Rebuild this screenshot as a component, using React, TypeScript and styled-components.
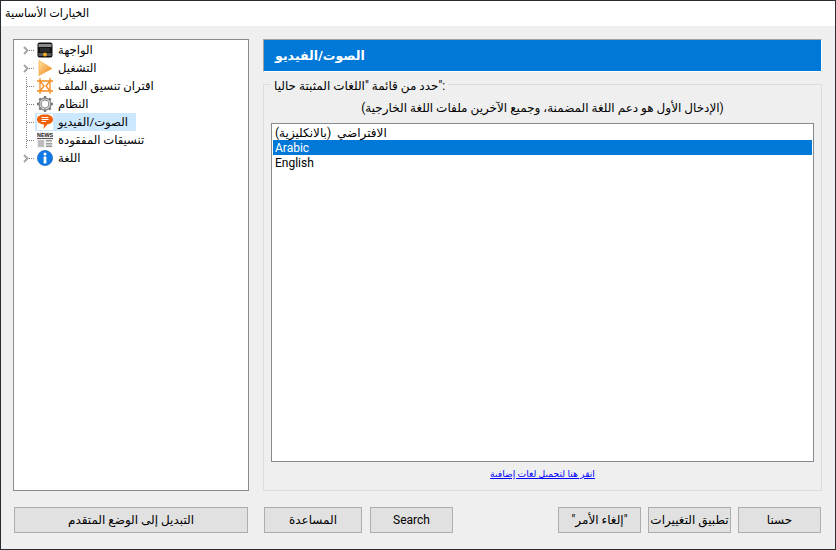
import React from 'react';
import styled, { createGlobalStyle } from 'styled-components';

const GlobalStyle = createGlobalStyle`
  html, body { margin: 0; padding: 0; background: #efefef; }
  body { font-family: Roboto, "DejaVu Sans", sans-serif; font-size: 12px; color: #000; }
`;

const Window = styled.div`
  width: 836px;
  height: 550px;
  box-sizing: border-box;
  border: 1px solid #2b2b33;
  display: flex;
  flex-direction: column;
  background: #efefef;
  overflow: hidden;
`;
const TitleBar = styled.div`
  height: 25px;
  flex: none;
  box-sizing: border-box;
  background: #fff;
  display: flex;
  align-items: center;
  padding: 0 0 0 4px;
  font-size: 11.3px;
`;
const Main = styled.div`
  display: flex;
  gap: 14px;
  height: 452px;
  margin: 13px 13px 0 12px;
`;
const TreeBox = styled.div`
  width: 236px;
  box-sizing: border-box;
  flex: none;
  background: #fff;
  border: 1px solid #868a91;
  padding-top: 1px;
`;
const TreeRow = styled.div`
  height: 18px;
  display: flex;
  align-items: center;
  padding-left: 8px;
`;
const Expander = styled.div<{ $stem?: 'full' | 'none' }>`
  position: relative;
  width: 13px;
  height: 18px;
  flex: none;
  &::before {
    content: '';
    position: absolute;
    left: 7px;
    right: 0;
    top: 9px;
    height: 1px;
    background: repeating-linear-gradient(90deg, #7d7d7d 0 1px, transparent 1px 2px);
  }
  ${(p) =>
    p.$stem === 'full' &&
    `&::before { left: 5px; }
    &::after {
      content: '';
      position: absolute;
      left: 4px;
      top: 0;
      bottom: 0;
      width: 1px;
      background: repeating-linear-gradient(180deg, #7d7d7d 0 1px, transparent 1px 2px);
    }`}
`;
const Chevron = styled.svg`
  position: absolute;
  left: 0;
  top: 5px;
  width: 7px;
  height: 9px;
`;
const Entry = styled.div<{ $selected?: boolean }>`
  height: 18px;
  display: flex;
  align-items: center;
  gap: 5px;
  padding: 0 ${(p) => (p.$selected ? 8 : 4)}px 0 2px;
  background: ${(p) => (p.$selected ? '#cce8ff' : 'transparent')};
`;
const EntryLabel = styled.span`
  font-size: 11.6px;
`;
const Icon = styled.svg`
  width: 16px;
  height: 16px;
  flex: none;
  display: block;
`;
const Panel = styled.div`
  flex: 1;
  display: flex;
  flex-direction: column;
  min-width: 0;
`;
const Header = styled.div`
  flex: none;
  box-sizing: border-box;
  height: 33px;
  background: #0078d7;
  border-top: 1px solid #a0a0a0;
  border-left: 1px solid #a0a0a0;
  border-right: 1px solid #fff;
  border-bottom: 1px solid #fff;
  color: #fff;
  font-weight: bold;
  font-size: 12.6px;
  display: flex;
  align-items: center;
  padding: 0 0 0 11px;
`;
const Group = styled.fieldset`
  margin: 4px 0 0;
  padding: 0 7px 0 7px;
  flex: 1;
  min-height: 0;
  border: 1px solid #dcdcdc;
  display: flex;
  flex-direction: column;
  min-inline-size: 0;
`;
const Legend = styled.legend`
  margin-left: 0;
  padding: 0 3px;
  height: 16px;
  line-height: 20px;
`;
const Hint = styled.div`
  text-align: center;
  height: 16px;
  line-height: 18px;
  margin-top: 7px;
`;
const ListBox = styled.div`
  height: 339px;
  box-sizing: border-box;
  margin: 8px 0 0;
  background: #fff;
  border: 1px solid #868a91;
  padding: 1px;
`;
const ListItem = styled.div<{ $selected?: boolean }>`
  height: 15px;
  line-height: 17px;
  padding-left: 2px;
  white-space: pre;
  background: ${(p) => (p.$selected ? '#0078d7' : 'transparent')};
  color: ${(p) => (p.$selected ? '#fff' : '#000')};
`;
const LinkRow = styled.div`
  text-align: center;
  margin-top: 5px;
  font-size: 9.2px;
  line-height: 14px;
`;
const MoreLink = styled.a`
  color: #0000ff;
  text-decoration: underline;
`;
const Footer = styled.div`
  display: flex;
  margin: 16px 14px 0 13px;
  height: 26px;
`;
const Button = styled.button<{ $width: number; $gap?: number }>`
  width: ${(p) => p.$width}px;
  margin-left: ${(p) => p.$gap ?? 0}px;
  height: 26px;
  flex: none;
  box-sizing: border-box;
  padding: 0;
  background: #e1e1e1;
  border: 1px solid #adadad;
  border-radius: 0;
  font: inherit;
  color: #000;
`;
const Spacer = styled.div`
  flex: 1;
`;

const FilmIcon = () => (
  <Icon viewBox="0 0 16 16">
    <rect x="0.5" y="0.5" width="15" height="15" rx="2" fill="#111" />
    <rect x="1.5" y="2" width="13" height="3" fill="#8b8b8b" />
    <rect x="1.5" y="11" width="13" height="3" fill="#555" />
    <circle cx="8" cy="12.5" r="2" fill="#f5a623" />
    <rect x="3" y="6" width="10" height="4" fill="#2a2a2a" />
  </Icon>
);
const PlayIcon = () => (
  <Icon viewBox="0 0 16 16">
    <defs>
      <linearGradient id="playFill" x1="0" y1="0" x2="1" y2="1">
        <stop offset="0" stopColor="#ffe9a8" />
        <stop offset="1" stopColor="#f07d10" />
      </linearGradient>
    </defs>
    <path d="M2 0.5 L15 8.5 L2 15.5 Z" fill="url(#playFill)" stroke="#f59a2a" strokeWidth="0.6" />
  </Icon>
);
const LinkIcon = () => (
  <Icon viewBox="0 0 16 16">
    <g fill="none" stroke="#f68a1e" strokeWidth="1.3">
      <path d="M0 3 H16 M0 13 H16" />
      <path d="M3 0 V16 M13 0 V16" />
      <path d="M3 3 L7 8 L3 13 M13 3 L9 8 L13 13" />
    </g>
  </Icon>
);
const GearIcon = () => (
  <Icon viewBox="0 0 16 16">
    <circle cx="8" cy="8" r="5" fill="none" stroke="#7a7a7a" strokeWidth="3.2" />
    <circle cx="8" cy="8" r="5" fill="none" stroke="#d8d8d8" strokeWidth="1.2" />
    <g stroke="#7a7a7a" strokeWidth="2.4">
      <path d="M8 0 V2.5 M8 13.5 V16 M0 8 H2.5 M13.5 8 H16" />
      <path d="M2.3 2.3 L4 4 M12 12 L13.7 13.7 M13.7 2.3 L12 4 M4 12 L2.3 13.7" />
    </g>
  </Icon>
);
const BubbleIcon = () => (
  <Icon viewBox="0 0 16 16">
    <rect width="16" height="16" fill="#fff" />
    <path d="M8 0.5 C13 0.5 16 2.5 16 5.5 C16 8.5 13 10 10.5 10.3 L6.5 15 L7 10.4 C3 10.2 0 8.5 0 5.5 C0 2.5 3 0.5 8 0.5 Z" fill="#f2600c" />
    <path d="M4.5 3.5 H11.5 M4.5 5.5 H11.5 M4.5 7.5 H9" stroke="#fff" strokeWidth="1" />
  </Icon>
);
const NewsIcon = () => (
  <Icon viewBox="0 0 16 16">
    <rect width="16" height="16" fill="#f1f1f1" />
    <text x="0" y="5" fontSize="5.4" fontWeight="bold" fontFamily="Liberation Sans" fill="#222">NEWS</text>
    <rect x="0" y="6" width="16" height="1" fill="#555" />
    <rect x="1" y="8" width="6" height="7" fill="#bdbdbd" />
    <rect x="9" y="8" width="6" height="1.5" fill="#9b9b9b" />
    <rect x="9" y="11" width="6" height="1.5" fill="#9b9b9b" />
    <rect x="9" y="13.5" width="6" height="1.5" fill="#9b9b9b" />
  </Icon>
);
const InfoIcon = () => (
  <Icon viewBox="0 0 16 16">
    <circle cx="8" cy="8" r="7.6" fill="#0f7ae5" stroke="#0a58b0" strokeWidth="0.6" />
    <circle cx="8" cy="4" r="1.5" fill="#fff" />
    <rect x="6.6" y="6.5" width="2.8" height="7" rx="0.8" fill="#fff" />
  </Icon>
);

const treeItems: { label: string; icon: React.ReactNode; chevron?: boolean; selected?: boolean }[] = [
  { label: 'الواجهة', icon: <FilmIcon />, chevron: true },
  { label: 'التشغيل', icon: <PlayIcon />, chevron: true },
  { label: 'اقتران تنسيق الملف', icon: <LinkIcon /> },
  { label: 'النظام', icon: <GearIcon /> },
  { label: 'الصوت/الفيديو', icon: <BubbleIcon />, selected: true },
  { label: 'تنسيقات المفقودة', icon: <NewsIcon /> },
  { label: 'اللغة', icon: <InfoIcon />, chevron: true },
];

const App: React.FC = () => {
  return (
    <Window>
      <GlobalStyle />
      <TitleBar>الخيارات الأساسية</TitleBar>
      <Main>
        <TreeBox>
          {treeItems.map((item) => (
            <TreeRow key={item.label}>
              <Expander $stem={item.chevron ? 'none' : 'full'}>
                {item.chevron && (
                  <Chevron viewBox="0 0 7 9">
                    <path d="M2 1 L5.5 4.5 L2 8" fill="none" stroke="#a6a6a6" strokeWidth="2" />
                  </Chevron>
                )}
              </Expander>
              <Entry $selected={item.selected}>
                {item.icon}
                <EntryLabel>{item.label}</EntryLabel>
              </Entry>
            </TreeRow>
          ))}
        </TreeBox>
        <Panel>
          <Header>الصوت/الفيديو</Header>
          <Group>
            <Legend>حدد من قائمة "اللغات المثبتة حاليا":</Legend>
            <Hint>(الإدخال الأول هو دعم اللغة المضمنة، وجميع الآخرين ملفات اللغة الخارجية)</Hint>
            <ListBox>
              <ListItem>الافتراضي  (بالانكليزية)</ListItem>
              <ListItem $selected>Arabic</ListItem>
              <ListItem>English</ListItem>
            </ListBox>
            <LinkRow>
              <MoreLink href="#">انقر هنا لتحميل لغات إضافية</MoreLink>
            </LinkRow>
          </Group>
        </Panel>
      </Main>
      <Footer>
        <Button $width={234}>التبديل إلى الوضع المتقدم</Button>
        <Button $width={98} $gap={16}>المساعدة</Button>
        <Button $width={83} $gap={8}>Search</Button>
        <Spacer />
        <Button $width={83}>"إلغاء الأمر"</Button>
        <Button $width={83} $gap={7}>تطبيق التغييرات</Button>
        <Button $width={83} $gap={7}>حسنا</Button>
      </Footer>
    </Window>
  );
};

export default App;
